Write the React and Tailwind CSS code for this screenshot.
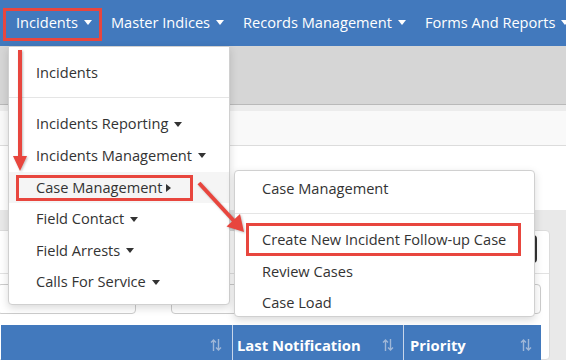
import React from 'react';

const font = { fontFamily: '"Open Sans", "Noto Sans", sans-serif' };

const Caret = ({ className = '' }) => (
    <span className={`inline-block w-0 h-0 border-x-[4.5px] border-x-transparent border-t-[5px] border-t-current align-middle ${className}`} />
);

const RightCaret = () => (
    <span className="inline-block w-0 h-0 border-y-[4.5px] border-y-transparent border-l-[5px] border-l-[#333] align-middle ml-[3px]" />
);

const SortIcon = () => (
    <svg width="12" height="14" viewBox="0 0 12 14" className="text-[#9fb7d8]">
        <path d="M3.5 13V2M1 4.5L3.5 2L6 4.5M8.5 1v11M6 9.5L8.5 12L11 9.5" stroke="currentColor" strokeWidth="1.4" fill="none" />
    </svg>
);

const NavItem = ({ label }) => (
    <div className="flex items-center gap-[6px] text-white text-[14.6px] whitespace-nowrap">
        {label}
        <Caret className="text-white" />
    </div>
);

const MenuItem = ({ label, caret, active }) => (
    <div className={`h-[31.6px] flex items-center pl-[27px] text-[14.6px] text-[#333] whitespace-nowrap ${active ? 'bg-[#f5f5f5]' : ''}`}>
        {label}
        {caret === 'down' && <Caret className="ml-[6px] text-[#333]" />}
        {caret === 'right' && <RightCaret />}
    </div>
);

const SubItem = ({ label }) => (
    <div className="h-[31.5px] flex items-center pl-[27px] text-[14.6px] text-[#333] whitespace-nowrap">{label}</div>
);

export default function App() {
    return (
        <div className="relative w-[566px] h-[360px] overflow-hidden bg-white" style={font}>
            {/* Top navigation */}
            <div className="h-[46px] bg-[#4279bd] flex items-center pl-[16px] gap-[19px]">
                <NavItem label="Incidents" />
                <NavItem label="Master Indices" />
                <NavItem label="Records Management" />
                <NavItem label="Forms And Reports" />
            </div>

            {/* Page background */}
            <div className="h-[59px] bg-[#d6d6d6] border-b border-[#b9b9b9]" />
            <div className="h-[6px] bg-[#ececec]" />
            <div className="h-[35px] bg-[#f9f9f9] border-b border-[#dcdcdc]" />
            <div className="h-[64px] bg-white" />
            <div className="bg-[#e9e9e9] h-[150px] pt-[20px] pr-[16px]">
                <div className="ml-[-10px] h-full bg-white border border-[#dcdcdc] rounded-[4px]">
                    <div className="h-[43px] border-b border-[#e2e2e2] flex justify-end items-start pt-[4px] pr-[12px]">
                        <div className="w-[40px] h-[28px] bg-[#333] rounded-[4px]" />
                    </div>
                    <div className="flex gap-[35px] pt-[10px] pl-[6px]">
                        <div className="w-[139px] h-[30px] border border-[#ccc] rounded-[4px]" />
                        <div className="w-[370px] h-[30px] border border-[#ccc] rounded-[4px]" />
                    </div>
                    <div className="mt-[11px] ml-[10px] w-[540px] h-[40px] bg-[#4279bd] flex text-white font-bold text-[14.8px]">
                        <div className="w-[232px] border-r border-[#c8d6ea] flex items-center justify-end pr-[10px]">
                            <SortIcon />
                        </div>
                        <div className="w-[171px] border-r border-[#c8d6ea] flex items-center justify-between pl-[4px] pr-[9px]">
                            <span>Last Notification</span>
                            <SortIcon />
                        </div>
                        <div className="flex-1 flex items-center justify-between pl-[6px] pr-[9px]">
                            <span>Priority</span>
                            <SortIcon />
                        </div>
                    </div>
                </div>
            </div>

            {/* Incidents dropdown */}
            <div className="absolute left-[8px] top-[46px] w-[222px] h-[259px] bg-white border border-[#d0d0d0] rounded-b-[4px] shadow-[0_3px_8px_rgba(0,0,0,0.15)] pt-[10px]">
                <MenuItem label="Incidents" />
                <div className="h-px bg-[#e5e5e5] mt-[8px] mb-[11px]" />
                <MenuItem label="Incidents Reporting" caret="down" />
                <MenuItem label="Incidents Management" caret="down" />
                <MenuItem label="Case Management" caret="right" active />
                <MenuItem label="Field Contact" caret="down" />
                <MenuItem label="Field Arrests" caret="down" />
                <MenuItem label="Calls For Service" caret="down" />
            </div>

            {/* Case Management submenu */}
            <div className="absolute left-[234px] top-[170px] w-[301px] h-[147px] bg-white border border-[#d0d0d0] rounded-[4px] shadow-[0_3px_8px_rgba(0,0,0,0.15)] pt-[2px]">
                <SubItem label="Case Management" />
                <div className="h-px bg-[#e5e5e5] mt-[8px] mb-[11px]" />
                <SubItem label="Create New Incident Follow-up Case" />
                <SubItem label="Review Cases" />
                <SubItem label="Case Load" />
            </div>

            {/* Highlight boxes */}
            <div className="absolute left-[3px] top-[8px] w-[99px] h-[33px] border-[3px] border-[#e8463e]" />
            <div className="absolute left-[16px] top-[175px] w-[177px] h-[26px] border-[3px] border-[#e8463e]" />
            <div className="absolute left-[246px] top-[223px] w-[275px] h-[33px] border-[3px] border-[#e8463e]" />

            {/* Arrows */}
            <svg className="absolute left-0 top-0 pointer-events-none" width="566" height="360" style={{ filter: 'drop-shadow(1px 1px 1px rgba(0,0,0,0.25))' }}>
                <line x1="20" y1="50" x2="20" y2="158" stroke="#e8463e" strokeWidth="4" />
                <polygon points="13,156 27,156 20,171" fill="#e8463e" />
                <line x1="199" y1="183" x2="234" y2="221" stroke="#e8463e" strokeWidth="4" />
                <polygon points="226.5,226.5 240,214 244,232" fill="#e8463e" />
            </svg>
        </div>
    );
}
